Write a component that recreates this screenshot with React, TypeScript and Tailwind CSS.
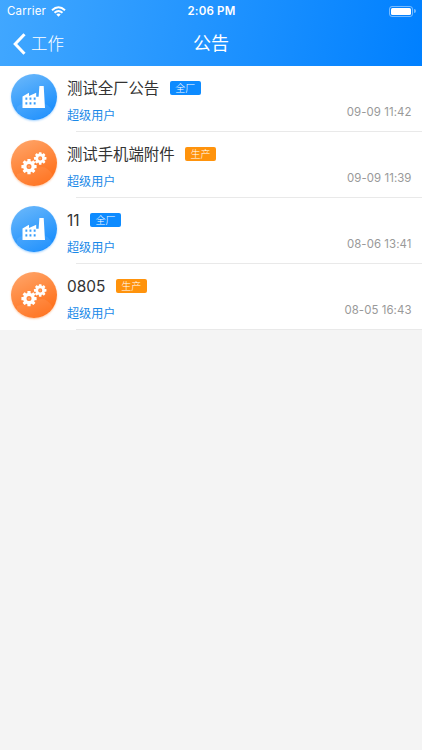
type Scope = 'factory' | 'production'

interface Notice {
  id: number
  title: string
  author: string
  time: string
  scope: Scope
}

const notices: Notice[] = [
  { id: 1, title: '测试全厂公告', author: '超级用户', time: '09-09 11:42', scope: 'factory' },
  { id: 2, title: '测试手机端附件', author: '超级用户', time: '09-09 11:39', scope: 'production' },
  { id: 3, title: '11', author: '超级用户', time: '08-06 13:41', scope: 'factory' },
  { id: 4, title: '0805', author: '超级用户', time: '08-05 16:43', scope: 'production' },
]

const toothAngles = [0, 45, 90, 135, 180, 225, 270, 315]

function Gear({ x, y, scale }: { x: number; y: number; scale: number }) {
  return (
    <g transform={`translate(${x} ${y}) scale(${scale})`}>
      <circle r="4.2" fill="none" stroke="#fff" strokeWidth="3.4" />
      {toothAngles.map((angle) => (
        <rect key={angle} x="-1.6" y="-7.6" width="3.2" height="2.7" rx="0.5" fill="#fff" transform={`rotate(${angle})`} />
      ))}
      <circle r="1.2" fill="#fff" fillOpacity="0.25" />
    </g>
  )
}

function FactoryIcon() {
  return (
    <svg viewBox="0 0 46 46" className="h-[46px] w-[46px]">
      <defs>
        <linearGradient id="factoryFill" x1="0.2" y1="0" x2="0.65" y2="1">
          <stop offset="0" stopColor="#69b7fb" />
          <stop offset="1" stopColor="#138bfd" />
        </linearGradient>
      </defs>
      <circle cx="23" cy="23" r="23" fill="url(#factoryFill)" />
      <path d="M6 33Q9 30 12 30V34H34V30Q38 31 41 36.500A23 23 0 0 1 6 38Z" fill="#fff" fillOpacity="0.08" />
      <path
        fill="#fff"
        fillRule="evenodd"
        d="M11.5 34V22.4L18 18.7V21.9L25.2 18.7V22.7H27.6L28.4 12H32.7L34 34ZM14.4 23.6V25.8H16.3V23.6ZM18.5 23.6V25.8H20.4V23.6ZM22.7 23.6V25.8H24.6V23.6ZM14.4 28.3V30.5H16.3V28.3ZM18.5 28.3V30.5H20.4V28.3ZM22.7 28.3V30.5H24.6V28.3Z"
      />
    </svg>
  )
}

function GearsIcon() {
  return (
    <svg viewBox="0 0 46 46" className="h-[46px] w-[46px]">
      <defs>
        <linearGradient id="gearsFill" x1="0.2" y1="0" x2="0.65" y2="1">
          <stop offset="0" stopColor="#ffa468" />
          <stop offset="1" stopColor="#ff6c14" />
        </linearGradient>
      </defs>
      <circle cx="23" cy="23" r="23" fill="url(#gearsFill)" />
      <path d="M6 34 27 28Q35 24 42 35.500A23 23 0 0 1 6 38.500Z" fill="#fff" fillOpacity="0.07" />
      <Gear x={18} y={26.6} scale={1} />
      <Gear x={29.2} y={18.4} scale={0.82} />
    </svg>
  )
}

function StatusBar() {
  return (
    <div className="grid h-[21px] grid-cols-3 items-center pl-[7px] pr-1.5 pt-px text-[11.5px]">
      <div className="flex items-center gap-[5px]">
        <span className="relative top-px tracking-[0.2px]">Carrier</span>
        <svg viewBox="0 0 15 11" className="h-[11px] w-[15px]" fill="none" stroke="#fff" strokeWidth="2">
          <path d="M1 4.200Q7.500-1.800 14 4.200" />
          <path d="M3.500 6.800Q7.500 3.200 11.500 6.800" />
          <path d="M5.300 8.400Q7.500 6.600 9.700 8.400L7.500 10.700Z" fill="#fff" stroke="none" />
        </svg>
      </div>
      <span className="relative top-px text-center font-semibold tracking-[0.2px]">2:06 PM</span>
      <div className="flex items-center justify-end gap-px">
        <div className="h-[11px] w-6 rounded-[3px] border border-white/45 p-px">
          <div className="h-full rounded-[1.5px] bg-white" />
        </div>
        <div className="h-1 w-[1.5px] rounded-r bg-white/45" />
      </div>
    </div>
  )
}

function NoticeRow({ notice }: { notice: Notice }) {
  const isFactory = notice.scope === 'factory'

  return (
    <li className="flex h-[66.1px] pl-[11px]">
      <div className={`mt-[7.5px] h-[46px] w-[46px] shrink-0 rounded-full ${isFactory ? 'shadow-[0_1px_2px_rgba(30,144,255,0.4)]' : 'shadow-[0_1px_2px_rgba(255,120,30,0.4)]'}`}>
        {isFactory ? <FactoryIcon /> : <GearsIcon />}
      </div>
      <div className="ml-[19px] flex flex-1 flex-col border-b border-[#e9e9e9]">
        <div className="-ml-[9px] mt-[11px] flex h-[22px] items-center">
          <h2 className="pt-[2px] text-[15.4px] leading-[22px] tracking-[-0.02px] text-[#333]">{notice.title}</h2>
          <span className={`ml-[10.5px] h-[14px] w-[31px] rounded-[2px] text-center text-[10px] font-light leading-[14px] text-white ${isFactory ? 'bg-[#0d8bff]' : 'bg-[#ff930c]'}`}>
            {isFactory ? '全厂' : '生产'}
          </span>
        </div>
        <div className="-ml-[9px] mt-[6px] flex items-start justify-between pr-[10.5px]">
          <span className="pt-[1.5px] text-[12.1px] leading-[18px] text-[#1989e8]">{notice.author}</span>
          <time className="text-[11.4px] leading-[14px] tracking-[0.08px] text-[#999]">{notice.time}</time>
        </div>
      </div>
    </li>
  )
}

export default function App() {
  return (
    <div className="h-[750px] w-full overflow-hidden bg-[#f4f4f4] font-[Inter,'Noto_Sans_CJK_SC',sans-serif]">
      <header className="h-[66px] bg-[linear-gradient(100deg,#41a7ff,#0080ff)] text-white">
        <StatusBar />
        <nav className="grid h-[45px] grid-cols-3 items-center px-[13px]">
          <button className="flex items-center gap-[5px] text-[16.5px] font-light">
            <svg viewBox="0 0 13 22" className="h-[22px] w-[13px]" fill="none" stroke="#fff" strokeWidth="3">
              <path d="M11.500 1.200 2.200 11 11.500 20.800" />
            </svg>
            <span className="pt-px">工作</span>
          </button>
          <h1 className="text-center text-[18px]">公告</h1>
        </nav>
      </header>
      <ul className="bg-white">
        {notices.map((notice) => (
          <NoticeRow key={notice.id} notice={notice} />
        ))}
      </ul>
    </div>
  )
}
